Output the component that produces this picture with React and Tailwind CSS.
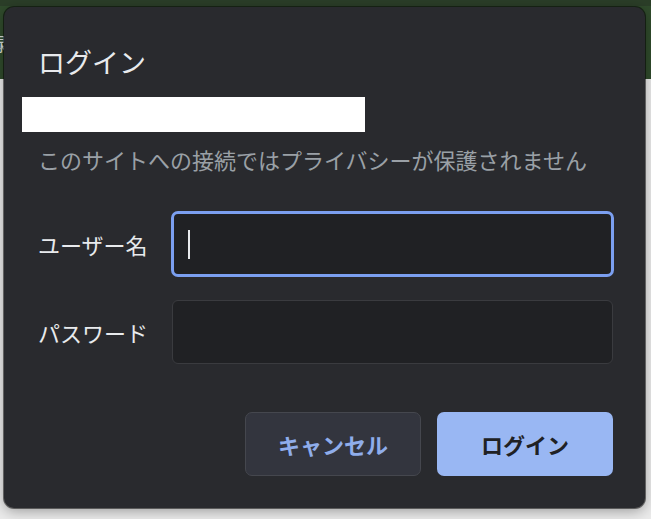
const jp = { fontFamily: '"Noto Sans CJK JP", "Noto Sans", sans-serif' }

function Field({ label, focused }) {
  return (
    <div className="flex items-center">
      <label className="w-[134px] shrink-0 text-[22px] leading-[28px] text-[#e8eaed]">{label}</label>
      {focused ? (
        <div className="-mx-[1px] flex h-[66px] flex-1 items-center rounded-[7px] border-[3px] border-[#7b9ff0] bg-[#202124] pl-[14px]">
          <span className="h-[29px] w-[2px] bg-[#e8eaed]" />
        </div>
      ) : (
        <div className="h-[64px] flex-1 rounded-[6px] border border-[#3a3b3f] bg-[#202124]" />
      )}
    </div>
  )
}

export default function App() {
  return (
    <div className="relative h-[519px] w-[651px] overflow-hidden bg-[#ebebeb]" style={jp}>
      {/* page behind the dialog */}
      <div className="h-[79px] border-t-[6px] border-[#2b3e28] bg-[#304b2c] pt-[26px]">
        <span className="-ml-[11px] text-[18px] leading-[20px] text-[#d9ddd6]">録</span>
      </div>

      {/* auth dialog */}
      <div className="absolute left-[4px] top-[7px] flex h-[501px] w-[641px] flex-col rounded-[10px] bg-[#292a2e] pt-[39px] pb-[32px] pr-[32px] shadow-[0_3px_14px_rgba(0,0,0,0.35)] ring-1 ring-black/50">
        <h1 className="pl-[34px] text-[27px] font-normal leading-[32px] text-[#e8eaed]">ログイン</h1>
        <div className="ml-[18px] mt-[19px] h-[35px] w-[343px] bg-white" />
        <p className="mt-[12px] pl-[34px] text-[22px] leading-[30px] text-[#9aa0a6]">このサイトへの接続ではプライバシーが保護されません</p>

        <div className="mt-[37px] flex flex-col gap-[23px] pl-[34px]">
          <Field label="ユーザー名" focused />
          <Field label="パスワード" />
        </div>

        <div className="mt-auto flex justify-end gap-[16px]">
          <button className="h-[64px] w-[176px] rounded-[7px] border border-[#45474e] bg-[#33353e] text-[22px] font-bold text-[#8fadeb]">キャンセル</button>
          <button className="h-[64px] w-[176px] rounded-[7px] bg-[#99b7f3] text-[22px] font-bold text-[#202124]">ログイン</button>
        </div>
      </div>
    </div>
  )
}
